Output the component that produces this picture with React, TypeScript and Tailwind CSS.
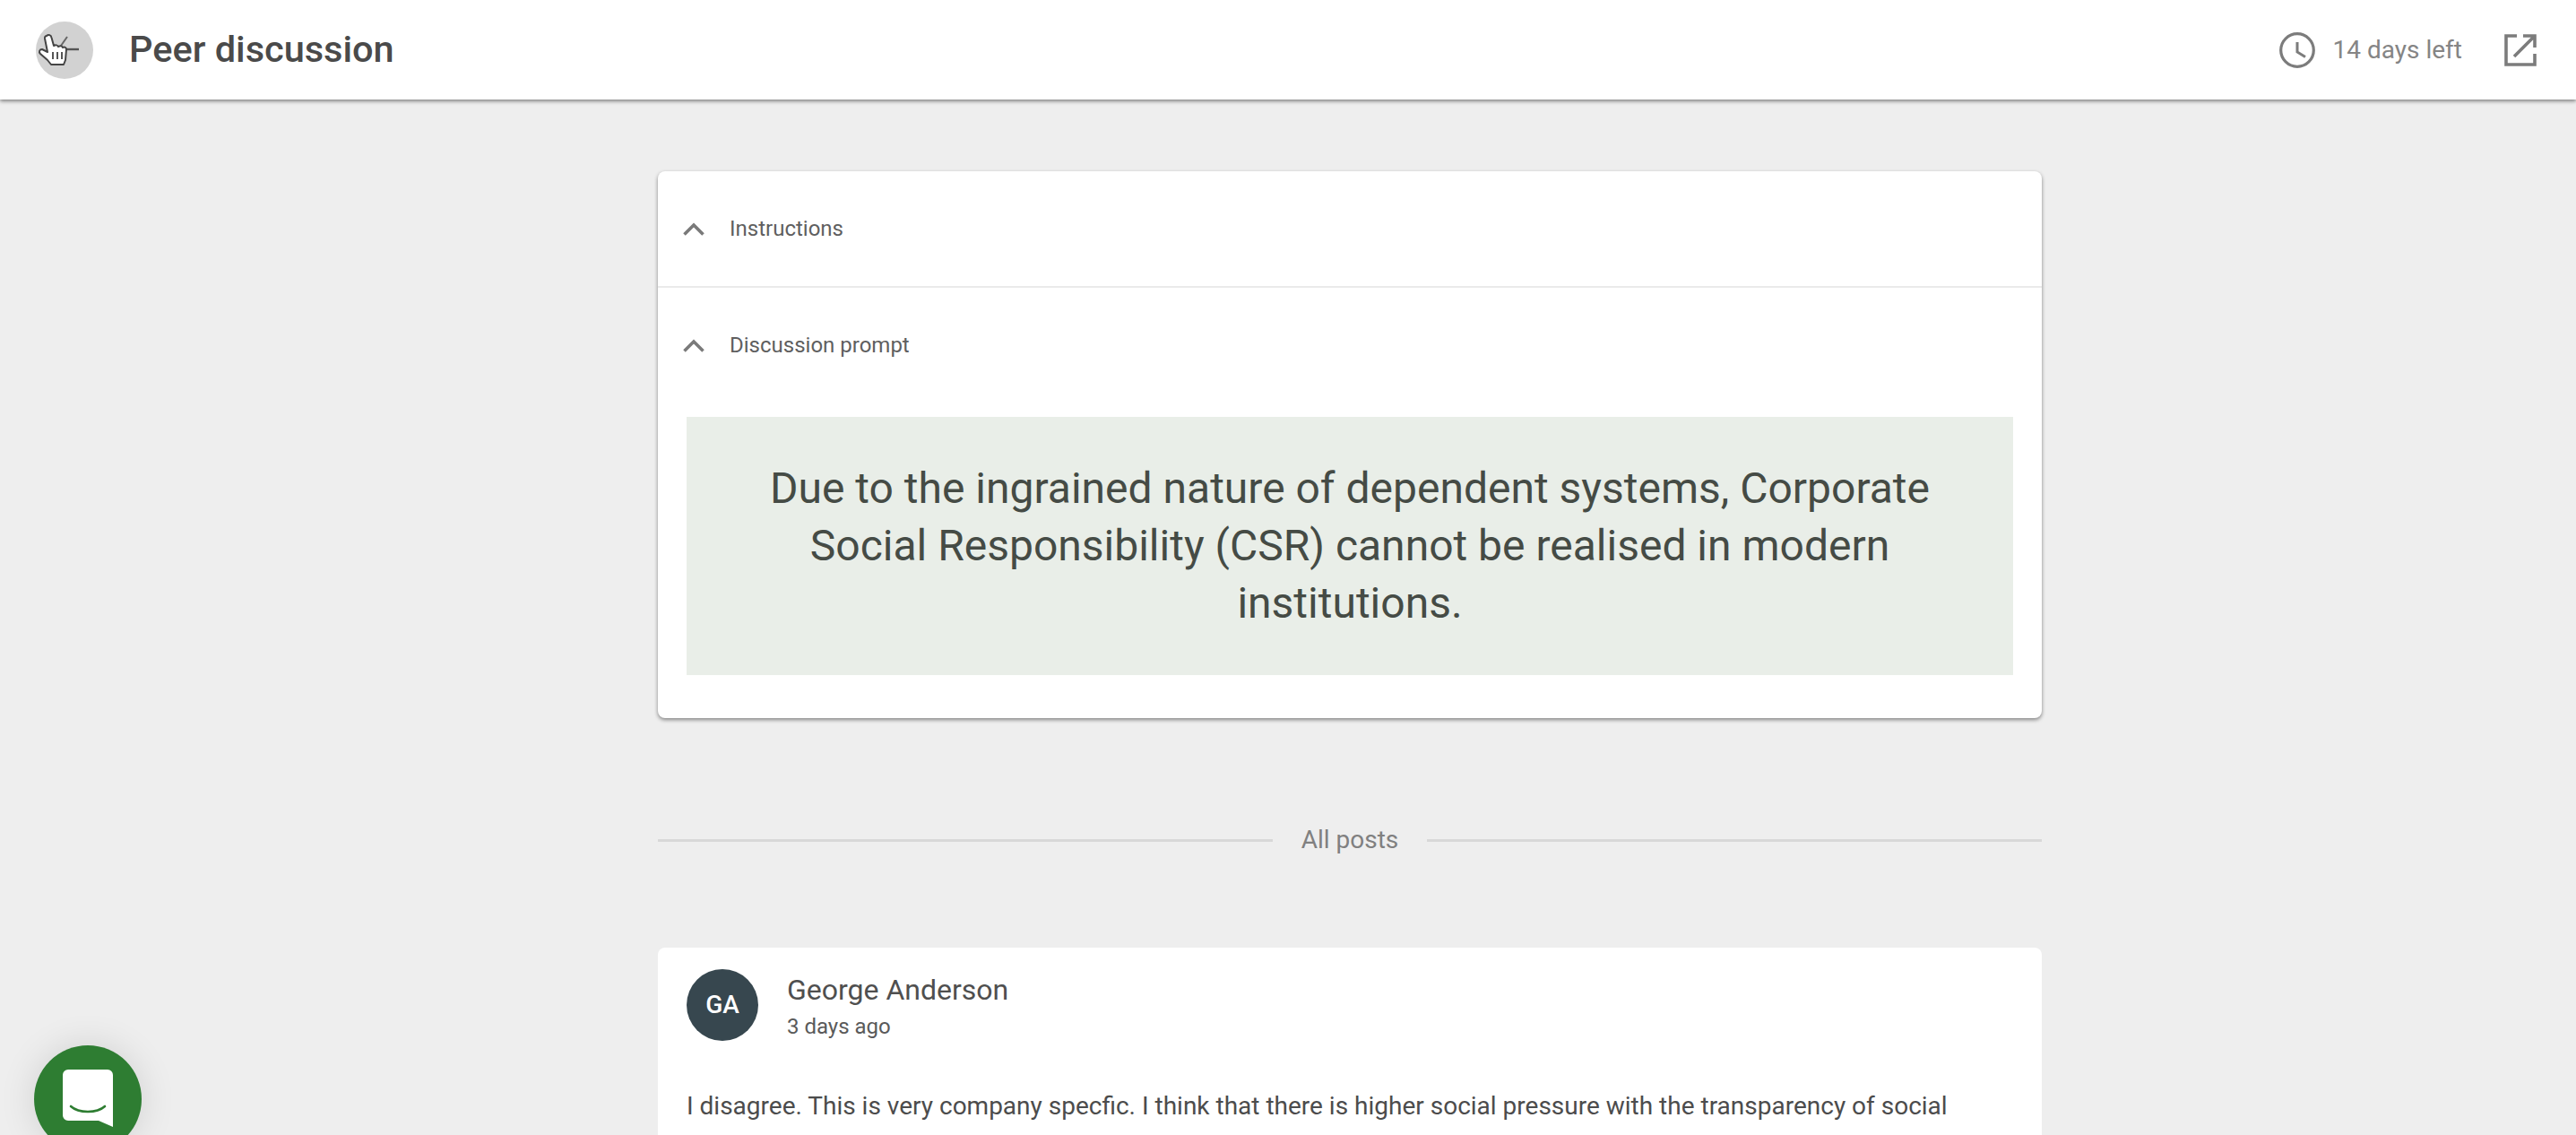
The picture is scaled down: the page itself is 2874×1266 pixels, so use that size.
import React from "react";

function Chevron() {
  return (
    <svg width="28" height="18" viewBox="0 0 28 18" fill="none" className="shrink-0">
      <path d="M3.5 15.5 L14 5 L24.5 15.5" stroke="#7a7a7a" strokeWidth="3.6" />
    </svg>
  );
}

function HandCursor() {
  return (
    <svg width="64" height="64" viewBox="0 0 64 64" fill="none">
      <path d="M28 27 L35 17" stroke="#666" strokeWidth="2" />
      <path d="M33 31 H48" stroke="#555" strokeWidth="2.4" />
      <g transform="translate(-9 0)">
        <path
          d="M21 16 c2 -2 5 -1 5.5 2 l2.5 9 c2 -1 4 -1 5 1 c2 -1 4 -1 5 1 c2 -1 4 0 4 2 l-1 12 l-2 5 H26 l-4 -5 l-8 -7 c-2 -2 -1 -5 2 -5 l6 3 l-3 -15 c-.3 -2 1 -3 2 -3 z"
          fill="#fff"
          stroke="#444"
          strokeWidth="2"
          strokeLinejoin="round"
        />
        <path d="M28 34 v8 M33 34 v8 M38 34 v8" stroke="#555" strokeWidth="2" />
      </g>
    </svg>
  );
}

export default function App() {
  return (
    <div className="relative h-screen overflow-hidden bg-[#eeeeee] font-['Roboto',sans-serif]">
      <header className="relative z-10 flex h-[111px] items-center justify-between bg-white pl-[40px] pr-[44px] shadow-[0_2px_4px_rgba(0,0,0,0.45)]">
        <div className="flex items-center gap-[40px]">
          <div className="flex h-[64px] w-[64px] items-center justify-center rounded-full bg-[#d2d2d2]">
            <HandCursor />
          </div>
          <h1 className="text-[41.5px] font-medium text-[#4a4a4a]">Peer discussion</h1>
        </div>
        <div className="flex items-center">
          <svg width="40" height="40" viewBox="0 0 40 40" fill="none" className="mr-[20px]">
            <circle cx="20" cy="20" r="18.3" stroke="#7c7c7c" strokeWidth="3.2" />
            <path d="M20 11 V22 L29 27.5" stroke="#7c7c7c" strokeWidth="3" />
          </svg>
          <span className="mr-[47px] text-[28px] text-[#858585]">14 days left</span>
          <svg width="36" height="36" viewBox="0 0 36 36" fill="none">
            <path d="M14 2 H2 V34 H34 V22" stroke="#7c7c7c" strokeWidth="3.6" />
            <path d="M21 2 H34 V15 M34 2 L11 25" stroke="#7c7c7c" strokeWidth="3.6" />
          </svg>
        </div>
      </header>

      <main className="flex flex-col items-center pl-[138px] pt-[80px]">
        <section className="w-[1544px] rounded-[8px] bg-white pb-[48px] shadow-[0_2px_4px_rgba(0,0,0,0.45)]">
          <div className="flex h-[130px] items-center gap-[26px] border-b-2 border-[#eaeaea] pb-px pl-[26px]">
            <Chevron />
            <span className="text-[24px] text-[#5f5f5f]">Instructions</span>
          </div>
          <div className="flex h-[144px] items-center gap-[26px] pb-[17px] pl-[26px]">
            <Chevron />
            <span className="text-[24px] text-[#5f5f5f]">Discussion prompt</span>
          </div>
          <div className="mx-[32px] flex h-[288px] items-center justify-center bg-[#e9eee8] px-[80px]">
            <p className="text-center text-[48px] leading-[64px] text-[#454b45]">
              Due to the ingrained nature of dependent systems, Corporate Social Responsibility (CSR) cannot be realised in modern institutions.
            </p>
          </div>
        </section>

        <div className="mt-[115px] flex w-[1544px] items-center gap-[32px]">
          <div className="h-[3px] flex-1 bg-[#d8d8d8]" />
          <span className="text-[28px] text-[#808080]">All posts</span>
          <div className="h-[3px] flex-1 bg-[#d8d8d8]" />
        </div>

        <article className="mt-[99px] w-[1544px] rounded-[8px] bg-white px-[32px] pt-[24px] pb-[40px]">
          <div className="flex items-start gap-[32px]">
            <div className="flex h-[80px] w-[80px] items-center justify-center rounded-full bg-[#37474f] text-[28px] font-medium text-white">
              GA
            </div>
            <div className="mt-[2px]">
              <div className="text-[32px] leading-[42px] text-[#4f4f4f]">George Anderson</div>
              <div className="text-[24px] leading-[40px] text-[#5a5a5a]">3 days ago</div>
            </div>
          </div>
          <p className="mt-[47px] text-[28px] leading-[44px] text-[#4c4c4c]">
            I disagree. This is very company specfic. I think that there is higher social pressure with the transparency of social
          </p>
        </article>
      </main>

      <button className="absolute left-[38px] top-[1166px] flex h-[120px] w-[120px] items-start justify-center rounded-full bg-[#2e7d32] pt-[27px] shadow-[0_0_40px_rgba(0,0,0,0.12)]">
        <svg width="56" height="64" viewBox="0 0 56 64" fill="none">
          <path d="M6 0 H50 a6 6 0 0 1 6 6 V64 L40 57 H6 a6 6 0 0 1 -6 -6 V6 a6 6 0 0 1 6 -6 z" fill="#fff" />
          <path d="M9 41 C18 49 38 49 47 41" stroke="#2e7d32" strokeWidth="2.6" strokeLinecap="round" />
        </svg>
      </button>
    </div>
  );
}
